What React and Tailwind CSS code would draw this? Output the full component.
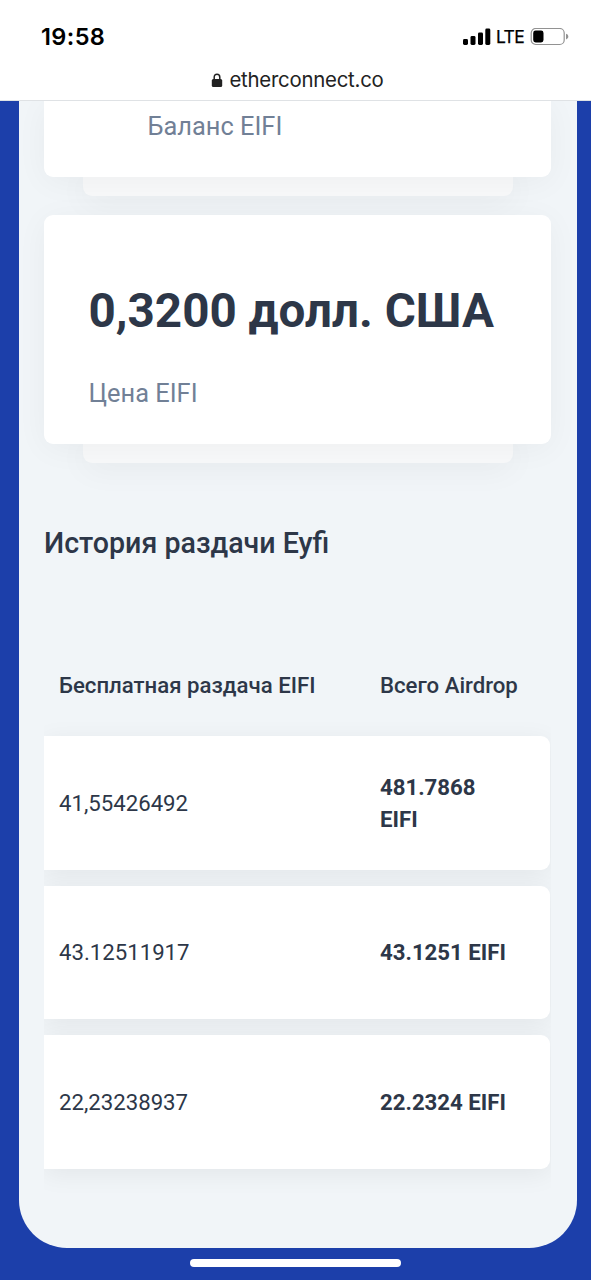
import React from 'react';

const airdrops = [
  { id: 1, amount: '41,55426492', total: '481.7868 EIFI' },
  { id: 2, amount: '43.12511917', total: '43.1251 EIFI' },
  { id: 3, amount: '22,23238937', total: '22.2324 EIFI' },
];

const StatusBar = () => (
  <div className="flex h-[60px] items-start justify-between pl-[41px] pr-[21px] pt-[22px] text-black">
    <span className="font-['Inter'] text-[23.5px] font-semibold leading-[29px] tracking-[0.4px]">19:58</span>
    <div className="flex h-[29px] items-center">
      <svg width="28" height="18" viewBox="0 0 28 18" fill="currentColor">
        <rect x="0" y="11" width="5" height="6" rx="1.4" />
        <rect x="7.5" y="8" width="5" height="9" rx="1.4" />
        <rect x="15" y="4.5" width="5" height="12.5" rx="1.4" />
        <rect x="22.3" y="0.5" width="5" height="16.5" rx="1.4" />
      </svg>
      <span className="ml-[5px] mt-px w-[29px] whitespace-nowrap font-['Inter'] text-[17.5px] font-normal tracking-[-0.6px] [-webkit-text-stroke:0.25px_black]">LTE</span>
      <svg className="ml-[5px]" width="40" height="18" viewBox="0 0 40 18">
        <rect x="1.2" y="0.5" width="33" height="16" rx="4.5" fill="none" stroke="#929292" strokeWidth="1.2" />
        <rect x="3.2" y="2.6" width="10.3" height="11.8" rx="2.4" fill="#000" />
        <path d="M36 5.8c1.6.5 2.3 1.5 2.3 2.8s-.7 2.3-2.3 2.8z" fill="#929292" />
      </svg>
    </div>
  </div>
);

const AddressBar = () => (
  <div className="flex h-10 items-center justify-center pl-[4px]">
    <svg className="mr-[6px]" width="12" height="15" viewBox="0 0 12 15">
      <path d="M3.2 7V4.3C3.2 2.4 4.2 1.3 6 1.3s2.8 1.1 2.8 3V7" fill="none" stroke="#222" strokeWidth="1.5" />
      <rect x="0.8" y="6.1" width="10.4" height="7.9" rx="1.5" fill="#222" />
    </svg>
    <span className="font-['Inter'] text-[20.4px] leading-6 tracking-[-0.25px] text-[#222]">etherconnect.co</span>
  </div>
);

const ReportCard = ({ className, children }) => (
  <div>
    <div className={`relative z-10 rounded-[9px] bg-white shadow-[0_5px_32px_#0000000b] ${className}`}>
      {children}
    </div>
    {/* second sheet peeking out below the card */}
    <div className="ml-[39px] mr-[38px] h-[19px] rounded-b-[9px] bg-[#f8f9fa] shadow-[0_5px_32px_#0000000f]" />
  </div>
);

const AirdropTable = () => (
  <div className="mt-[89px] overflow-hidden pb-8">
    <div className="flex h-[84px] items-start pl-[15px] pt-[17px] text-[22.2px] font-medium leading-[32px]">
      <div className="w-[321px] whitespace-nowrap">Бесплатная раздача EIFI</div>
      <div className="whitespace-nowrap">Всего Airdrop</div>
    </div>
    <div className="mr-px flex flex-col gap-4">
      {airdrops.map((item) => (
        <div
          key={item.id}
          className="flex h-[133.5px] items-center rounded-r-[9px] bg-white pl-[15px] pt-px text-[22.2px] leading-[31.5px] shadow-[0_5px_26px_#00000010]"
        >
          <div className="w-[321px]">{item.amount}</div>
          <div className="w-[132px] font-bold">{item.total}</div>
        </div>
      ))}
    </div>
  </div>
);

const App = () => {
  return (
    <div className="flex h-[1280px] w-[591px] flex-col overflow-hidden bg-[#1c3faa] font-['Roboto',sans-serif] text-[#2d3748]">
      <header className="relative z-20 h-[101px] shrink-0 border-b border-[#dfe2e5] bg-white">
        <StatusBar />
        <AddressBar />
      </header>

      <main className="ml-[19px] h-[1147px] w-[558px] shrink-0 rounded-b-[48px] bg-[#f1f5f8] pl-[25px] pr-[26px]">
        <ReportCard className="h-[76.4px] rounded-t-none pl-[103.5px] pt-[6px]">
          <div className="text-[25.4px] leading-[38px] text-[#718096]">Баланс EIFI</div>
        </ReportCard>

        <div className="mt-[19px]">
          <ReportCard className="h-[229px] pl-[44.5px] pt-[61px]">
            <div className="whitespace-nowrap text-[47.6px] font-bold leading-[70px]">0,3200 долл. США</div>
            <div className="mt-[28px] text-[25.4px] leading-[38px] text-[#718096]">Цена EIFI</div>
          </ReportCard>
        </div>

        <h2 className="mt-[60px] text-[28.6px] font-medium leading-[40px]">История раздачи Eyfi</h2>

        <AirdropTable />
      </main>

      <div className="flex h-8 shrink-0 justify-center pt-[11px]">
        <div className="h-[8px] w-[211px] rounded-full bg-white" />
      </div>
    </div>
  );
};

export default App;
